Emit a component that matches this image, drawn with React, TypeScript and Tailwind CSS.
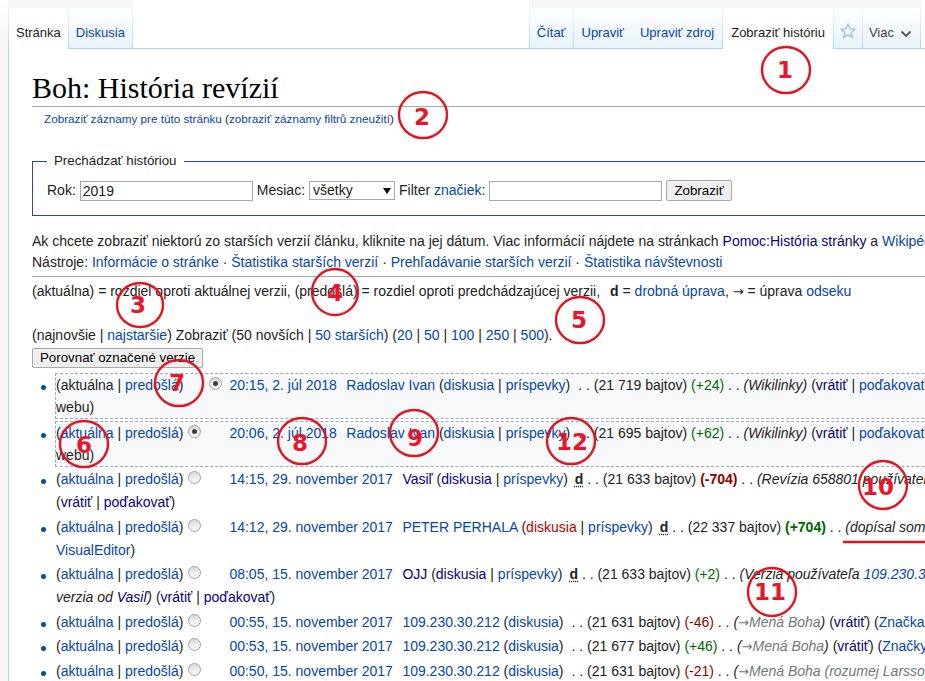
import React from "react";

const L = "text-[#0645ad]";
const V = "text-[#0b0080]";
const N = "text-[#ba0000]";
const POS = "text-[#006400]";
const NEG = "text-[#8b0000]";
const GRAY = "text-[#72777d]";

function Sep() {
  return <span className="w-px h-[41px] bg-linear-to-b from-[#a7d7f9]/0 to-[#a7d7f9]" />;
}

function Arrow() {
  return <span className="font-['DejaVu_Sans',sans-serif] text-[13px]">→</span>;
}

function Tab({
  label,
  selected,
  className,
  children,
}: {
  label?: string;
  selected?: boolean;
  className?: string;
  children?: React.ReactNode;
}) {
  return (
    <div
      className={`h-[41px] pt-[17px] leading-[16px] text-[13px] whitespace-nowrap ${
        selected
          ? "bg-white text-[#222]"
          : "bg-linear-to-b from-white to-[#e8f2f8] border-b border-[#a7d7f9] text-[#0645ad]"
      } ${className ?? ""}`}
    >
      {label}
      {children}
    </div>
  );
}

function Radio({ mode, className }: { mode: "hidden" | "on" | "off"; className?: string }) {
  return (
    <span
      className={`relative inline-block w-[13px] h-[13px] rounded-full border border-[#a3a3a3] bg-linear-to-b from-[#d9d9d9] to-[#fbfbfb] ${
        mode === "hidden" ? "invisible" : ""
      } ${className ?? ""}`}
    >
      {mode === "on" && (
        <span className="absolute left-[3px] top-[3px] w-[5px] h-[5px] rounded-full bg-[#3f3f3f]" />
      )}
    </span>
  );
}

function Row({
  sel,
  cur,
  r1,
  r2,
  date,
  children,
  line2,
}: {
  sel?: boolean;
  cur?: boolean;
  r1: "hidden" | "on" | "off";
  r2: "hidden" | "on" | "off";
  date: string;
  children: React.ReactNode;
  line2?: React.ReactNode;
}) {
  return (
    <li
      className={`relative mb-[1.5px] ${
        sel
          ? "border border-dashed border-[#a2a9b1] bg-[#f8f9fa] leading-[22px]"
          : "border-l border-transparent leading-[23px]"
      }`}
    >
      <span className="absolute left-[-15px] top-[11px] w-[5px] h-[5px] rounded-full bg-[#00528c]" />
      <span className="whitespace-nowrap">
        ({cur ? <span>aktuálna</span> : <a className={L}>aktuálna</a>} | <a className={L}>predošlá</a>)
        <Radio mode={r1} className="ml-[5px]" />
        <Radio mode={r2} className="ml-[8px]" />
        <a className={`ml-[7px] ${L}`}>{date}</a>
        {children}
      </span>
      {line2 && (
        <>
          <br />
          {line2}
        </>
      )}
    </li>
  );
}

function Sp() {
  return <span className="ml-[8px]">. .</span>;
}

function D() {
  return <span className="ml-[7px] font-bold underline decoration-dotted underline-offset-2">d</span>;
}

function Annotations() {
  const circles: [number, number, number, number, string, number, number][] = [
    [786, 70, 24, 23, "1", 785, 70],
    [423, 115, 24, 23, "2", 422, 117],
    [140, 305, 23, 22, "3", 138, 305],
    [335, 292, 23, 23, "4", 335, 293],
    [580, 320, 24, 23, "5", 579, 320],
    [84, 444, 24, 23, "6", 84, 445],
    [179, 383, 24, 23, "7", 177, 383],
    [302, 441, 24, 23, "8", 300, 443],
    [414, 433, 24, 23, "9", 415, 438],
    [883, 485, 24, 24, "10", 878, 487],
    [772, 592, 24, 24, "11", 770, 592],
    [571, 441, 24, 23, "12", 572, 442],
  ];
  return (
    <svg
      className="absolute left-0 top-0 pointer-events-none"
      width={925}
      height={681}
      viewBox="0 0 925 681"
    >
      {circles.map(([cx, cy, rx, ry, t, tx, ty]) => (
        <g key={t}>
          <ellipse cx={cx} cy={cy} rx={rx} ry={ry} fill="none" stroke="#e3131f" strokeWidth={2.4} />
          <text
            x={tx}
            y={ty}
            textAnchor="middle"
            dominantBaseline="central"
            fontFamily="'DejaVu Sans', Verdana, sans-serif"
            fontWeight={700}
            fontSize={23}
            fill="#e8162b"
          >
            {t}
          </text>
        </g>
      ))}
      <line x1={843} y1={542} x2={925} y2={542} stroke="#e3131f" strokeWidth={2.5} />
    </svg>
  );
}

export default function App() {
  return (
    <div className="relative w-[925px] h-[681px] overflow-hidden bg-[#f6f6f6] font-['Liberation_Sans',Arial,sans-serif] text-[#222]">
      <div className="w-[1300px]">
        {/* Header tabs */}
        <div className="flex items-end h-[49px]">
          <div className="w-[8px] h-[49px] bg-linear-to-b from-white to-[#f6f6f6]" />
          <Sep />
          <Tab label="Stránka" selected className="px-[7px]" />
          <Sep />
          <Tab label="Diskusia" className="px-[7px]" />
          <Sep />
          <div className="flex-1 h-[49px] bg-white border-b border-[#a7d7f9]" />
          <Sep />
          <Tab label="Čítať" className="px-[7px]" />
          <Sep />
          <Tab label="Upraviť" className="px-[8px]" />
          <Tab label="Upraviť zdroj" className="px-[8px]" />
          <Sep />
          <Tab label="Zobraziť históriu" selected className="px-[8px]" />
          <Sep />
          <Tab className="w-[28px] flex justify-center !pt-[15px]">
            <svg width="16" height="16" viewBox="0 0 16 16">
              <polygon
                points="8,1 9.94,5.83 15.13,6.18 11.14,9.52 12.41,14.57 8,11.8 3.59,14.57 4.86,9.52 0.87,6.18 6.06,5.83"
                fill="none"
                stroke="#8bbde6"
                strokeWidth="1.1"
                strokeLinejoin="round"
              />
            </svg>
          </Tab>
          <Sep />
          <Tab className="pl-[6px] pr-[8px] flex items-start !text-[#444]">
            <span>Viac</span>
            <svg className="ml-[6px] mt-[5px]" width="12" height="8" viewBox="0 0 12 8">
              <polyline points="1.5,1.5 6,6 10.5,1.5" fill="none" stroke="#555" strokeWidth="1.8" />
            </svg>
          </Tab>
          <Sep />
          <div className="w-[379px] h-[49px] bg-white border-b border-[#a7d7f9]" />
        </div>

        {/* Content */}
        <div className="ml-[8px] border-l border-[#a7d7f9] bg-white pl-[23px] pt-[20px] pb-[60px] text-[14px]">
          <h1 className="font-['Liberation_Serif','Times_New_Roman',serif] text-[30px] leading-[37px] text-black border-b border-[#a2a9b1]">
            Boh: História revízií
          </h1>
          <div className="mt-[3px] ml-[12px] text-[11.7px] leading-[18px]">
            <a className={L}>Zobraziť záznamy pre túto stránku</a> (
            <a className={L}>zobraziť záznamy filtrů zneužití</a>)
          </div>

          <fieldset className="mt-[24px] border border-[#2a4b8d] px-[14px] pt-[10px] pb-[14px]">
            <legend className="px-[7px] text-[13.3px] leading-[18px]">Prechádzať históriou</legend>
            <div className="flex items-center gap-[4px] h-[21px] whitespace-nowrap">
              <span>Rok:</span>
              <input
                defaultValue="2019"
                className="w-[173px] h-[20px] border border-[#a9a9a9] bg-white px-[2px] text-[14px] leading-[18px] outline-none"
              />
              <span>Mesiac:</span>
              <div className="flex items-center justify-between w-[86px] h-[19px] border border-[#a9a9a9] bg-white pl-[3px] pr-[3px] leading-[17px]">
                <span>všetky</span>
                <svg width="8" height="6" viewBox="0 0 8 6">
                  <polygon points="0,0 8,0 4,6" fill="#000" />
                </svg>
              </div>
              <span>
                Filter <a className={L}>značiek</a>:
              </span>
              <input className="w-[173px] h-[20px] border border-[#a9a9a9] bg-white px-[2px] text-[14px] outline-none" />
              <button className="h-[21px] px-[7px] border border-[#a9a9a9] rounded-[2px] bg-[#efefef] text-[13.3px] leading-[19px] text-black">
                Zobraziť
              </button>
            </div>
          </fieldset>

          <div className="mt-[15px] leading-[21px] pb-[3px] border-b border-[#a2a9b1]">
            <div className="whitespace-nowrap">
              Ak chcete zobraziť niektorú zo starších verzií článku, kliknite na jej dátum. Viac informácií nájdete na
              stránkach <a className={V}>Pomoc:História stránky</a> a <a className={L}>Wikipédia:História stránky</a>.
            </div>
            <div className="whitespace-nowrap">
              Nástroje: <a className={L}>Informácie o stránke</a> · <a className={L}>Štatistika starších verzií</a> ·{" "}
              <a className={L}>Prehľadávanie starších verzií</a> · <a className={L}>Štatistika návštevnosti</a>
            </div>
          </div>

          <div className="mt-[4px] leading-[21px] whitespace-nowrap">
            (aktuálna) = rozdiel oproti aktuálnej verzii, (predošlá) = rozdiel oproti predchádzajúcej verzii,
            <span className="ml-[10px] font-bold">d</span> = <a className={L}>drobná úprava</a>, <Arrow /> = úprava{" "}
            <a className={L}>odseku</a>
          </div>

          <div className="mt-[23px] leading-[21px] whitespace-nowrap">
            (najnovšie | <a className={L}>najstaršie</a>) Zobraziť (50 novších | <a className={L}>50 starších</a>) (
            <a className={L}>20</a> | <a className={L}>50</a> | <a className={L}>100</a> | <a className={L}>250</a> |{" "}
            <a className={L}>500</a>).
          </div>

          <button className="mt-[2px] h-[20px] px-[7px] border border-[#a9a9a9] rounded-[2px] bg-[#efefef] text-[13.3px] leading-[18px] text-black">
            Porovnať označené verzie
          </button>

          <ul className="mt-[5px] ml-[23px]">
            <Row sel cur r1="hidden" r2="on" date="20:15, 2. júl 2018" line2={<span>webu)</span>}>
              <span className="ml-[9.5px]">
                <a className={L}>Radoslav Ivan</a> (<a className={L}>diskusia</a> | <a className={L}>príspevky</a>)
              </span>
              <Sp /> (21 719 bajtov) <span className={POS}>(+24)</span> . . <i>(Wikilinky)</i> (
              <a className={V}>vrátiť</a> | <a className={L}>poďakovať</a>) (<a className={L}>Značky</a>: Mobilná
              úprava, Úprava z mobilného
            </Row>
            <Row sel r1="on" r2="hidden" date="20:06, 2. júl 2018" line2={<span>webu)</span>}>
              <span className="ml-[9.5px]">
                <a className={L}>Radoslav Ivan</a> (<a className={L}>diskusia</a> | <a className={L}>príspevky</a>)
              </span>
              <Sp /> (21 695 bajtov) <span className={POS}>(+62)</span> . . <i>(Wikilinky)</i> (
              <a className={V}>vrátiť</a> | <a className={L}>poďakovať</a>) (<a className={L}>Značky</a>: Mobilná
              úprava, Úprava z mobilného
            </Row>
            <Row
              r1="off"
              r2="hidden"
              date="14:15, 29. november 2017"
              line2={
                <span>
                  (<a className={V}>vrátiť</a> | <a className={V}>poďakovať</a>)
                </span>
              }
            >
              <span className="ml-[9.5px]">
                <a className={V}>Vasiľ</a> (<a className={V}>diskusia</a> | <a className={L}>príspevky</a>)
              </span>
              <D /> . . (21 633 bajtov) <b className={NEG}>(-704)</b> . .{" "}
              <i>
                (Revízia 658801 používateľa <a className={L}>PETER PERHALA</a> (<a className={N}>diskusia</a>) bola
                vrátená)
              </i>
            </Row>
            <Row
              r1="off"
              r2="hidden"
              date="14:12, 29. november 2017"
              line2={
                <span>
                  <a className={L}>VisualEditor</a>)
                </span>
              }
            >
              <span className="ml-[9.5px]">
                <a className={L}>PETER PERHALA</a> (<a className={N}>diskusia</a> | <a className={L}>príspevky</a>)
              </span>
              <D /> . . (22 337 bajtov) <b className={POS}>(+704)</b> . .{" "}
              <i>(dopísal som pár nových informácií o Bohu)</i> (<a className={V}>vrátiť</a> |{" "}
              <a className={L}>poďakovať</a>) (<a className={L}>Značka</a>: Úprava cez
            </Row>
            <Row
              r1="off"
              r2="hidden"
              date="08:05, 15. november 2017"
              line2={
                <span>
                  <i>
                    verzia od <a className={V}>Vasiľ</a>)
                  </i>{" "}
                  (<a className={V}>vrátiť</a> | <a className={V}>poďakovať</a>)
                </span>
              }
            >
              <span className="ml-[9.5px]">
                <a className={V}>OJJ</a> (<a className={V}>diskusia</a> | <a className={L}>príspevky</a>)
              </span>
              <D /> . . (21 633 bajtov) <span className={POS}>(+2)</span> . .{" "}
              <i>
                (Verzia používateľa <a className={L}>109.230.30.212</a> (<a className={L}>diskusia</a>) bola vrátená;
                obnovená posledná
              </i>
            </Row>
            <Row r1="off" r2="hidden" date="00:55, 15. november 2017">
              <span className="ml-[9.5px]">
                <a className={L}>109.230.30.212</a> (<a className={L}>diskusia</a>)
              </span>
              <Sp /> (21 631 bajtov) <span className={NEG}>(-46)</span> . .{" "}
              <i>
                (<a className={GRAY}><Arrow />Mená Boha</a>)
              </i>{" "}
              (<a className={V}>vrátiť</a>) (<a className={L}>Značka</a>: Úprava z mobilného webu)
            </Row>
            <Row r1="off" r2="hidden" date="00:53, 15. november 2017">
              <span className="ml-[9.5px]">
                <a className={L}>109.230.30.212</a> (<a className={L}>diskusia</a>)
              </span>
              <Sp /> (21 677 bajtov) <span className={POS}>(+46)</span> . .{" "}
              <i>
                (<a className={GRAY}><Arrow />Mená Boha</a>)
              </i>{" "}
              (<a className={V}>vrátiť</a>) (<a className={L}>Značky</a>: Mobilná úprava, Úprava z mobilného webu)
            </Row>
            <Row r1="off" r2="hidden" date="00:50, 15. november 2017">
              <span className="ml-[9.5px]">
                <a className={L}>109.230.30.212</a> (<a className={L}>diskusia</a>)
              </span>
              <Sp /> (21 631 bajtov) <span className={NEG}>(-21)</span> . .{" "}
              <i>
                (<a className={GRAY}><Arrow />Mená Boha</a>
                <span className={GRAY}> (rozumej Larsson a Jahve)</span>)
              </i>
            </Row>
          </ul>
        </div>
      </div>
      <Annotations />
    </div>
  );
}
